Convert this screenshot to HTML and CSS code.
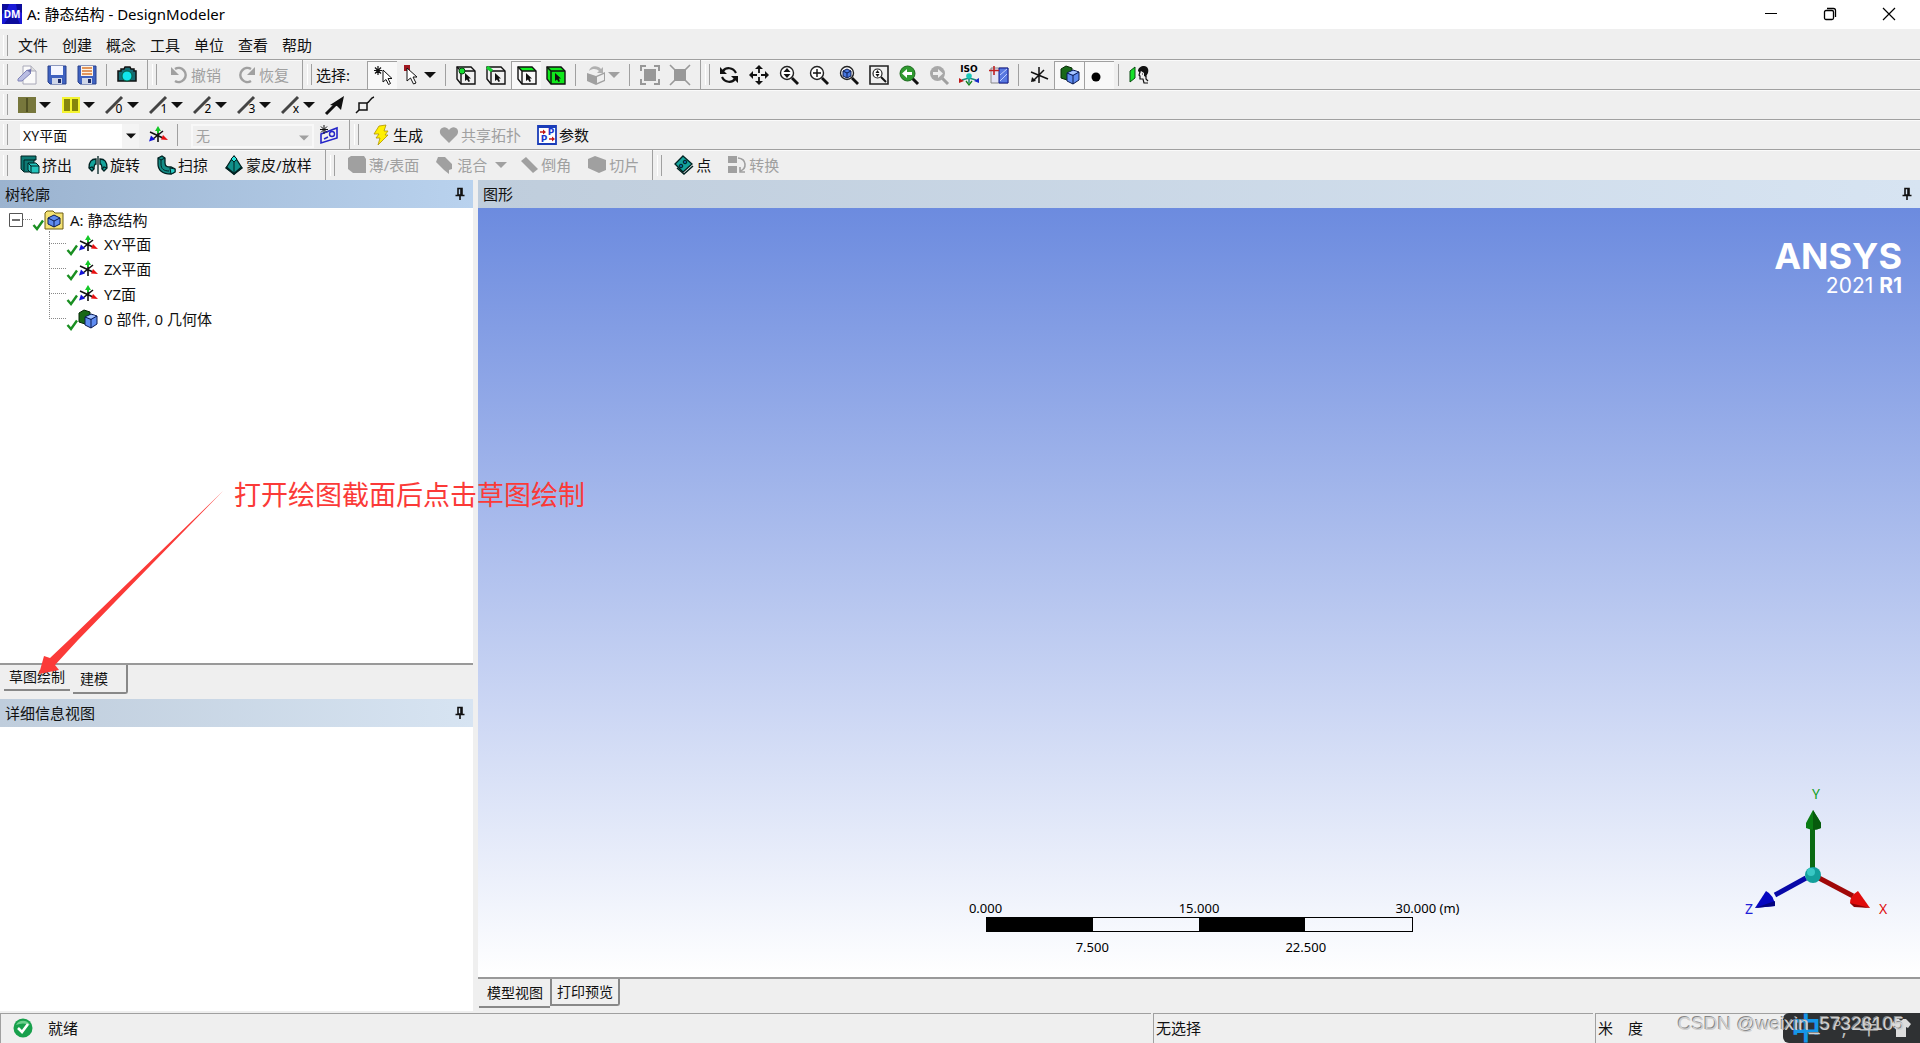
FILE: index.html
```html
<!DOCTYPE html>
<html lang="zh-CN">
<head>
<meta charset="utf-8">
<title>A: 静态结构 - DesignModeler</title>
<link rel="stylesheet" href="styles.css">
</head>
<body>
<svg class="defs" aria-hidden="true">
  <symbol id="caret" viewBox="0 0 12 8"><path d="M0 1h12L6 7z" fill="currentColor"/></symbol>
  <symbol id="pin" viewBox="0 0 12 14"><path d="M4 1.500h4V8H4zM7 2v6M1.500 8.500h9M6 9v4" fill="none" stroke="#111" stroke-width="1.600"/></symbol>
  <symbol id="check" viewBox="0 0 12 12"><path d="M1.500 6l3.500 4 6-8.500" fill="none" stroke="#1a8f22" stroke-width="2.400"/></symbol>
  <symbol id="axes" viewBox="0 0 20 20"><path d="M2 7l13 6M15 6L5 14M10 6v11" stroke="#111" stroke-width="1.600"/><path d="M7 6l3-5 3 5z" fill="#14c828"/><path d="M10 3v5" stroke="#14c828" stroke-width="2"/><path d="M20 15l-7-.5 2-4.500z" fill="#e81010"/><path d="M1 16.500l2-6 4 4z" fill="#1010d8"/></symbol>
  <symbol id="bodies" viewBox="0 0 20 20"><path d="M1 4l5-3 6 2v10l-5 2-6-2z" fill="#186818" stroke="#052805"/><path d="M7 8l6-3 6 2v8l-6 4-6-3z" fill="#5f8cf0" stroke="#0a1a50"/><path d="M8 8l5-2 5 1-5 2.500z" fill="#a8c6ff"/><path d="M7 8l6 2.500L19 7M13 10.500V19" fill="none" stroke="#0a1a50"/></symbol>
  <symbol id="cube" viewBox="0 0 20 20"><path d="M1 2h14l4 4v13H5L1 14z" fill="none" stroke="#111" stroke-width="1.400"/><path d="M1 2l4 4h14M5 6v13" fill="none" stroke="#111" stroke-width="1.400"/><path d="M9 8v8l2-1.500L12.500 17l1.500-.8-1.300-2.700H15z" fill="#111"/></symbol>
  <symbol id="lens" viewBox="0 0 20 20"><circle cx="8" cy="8" r="6.500" fill="#fff" stroke="#222" stroke-width="1.400"/><path d="M13 13l6 6" stroke="#111" stroke-width="2.800"/></symbol>
  <symbol id="edge" viewBox="0 0 20 20"><path d="M1 18L17 2" stroke="#444" stroke-width="3"/></symbol>
</svg>

<div class="window">
  <header class="titlebar">
    <svg class="app-icon" viewBox="0 0 20 20"><path d="M0 0h20v20H0z" fill="#1a1ad8"/><path d="M0 0h7l-3 8-4 2zM14 0h6v9l-5-3zM2 20l5-7h8l3 7z" fill="#0c0c9c"/><text x="10" y="14" text-anchor="middle" class="app-mark">DM</text></svg>
    <h1>A: 静态结构 - DesignModeler</h1>
    <div class="caption">
      <button type="button" aria-label="最小化"><svg viewBox="0 0 14 14"><path d="M1 6.500h12" stroke="#000"/></svg></button>
      <button type="button" aria-label="还原"><svg viewBox="0 0 14 14"><path d="M4 1.500h6.500a2 2 0 0 1 2 2V10" fill="none" stroke="#000" stroke-width="1.300"/><rect x="1.500" y="3.500" width="9" height="9" rx="1.500" fill="none" stroke="#000" stroke-width="1.300"/></svg></button>
      <button type="button" aria-label="关闭"><svg viewBox="0 0 14 14"><path d="M1 1l12 12M13 1L1 13" stroke="#000" stroke-width="1.200"/></svg></button>
    </div>
  </header>

  <nav class="bar menu" aria-label="主菜单">
    <button type="button">文件</button><button type="button">创建</button><button type="button">概念</button><button type="button">工具</button><button type="button">单位</button><button type="button">查看</button><button type="button">帮助</button>
  </nav>

  <div class="bar">
    <div class="group">
      <button class="tool" type="button" aria-label="新建"><svg viewBox="0 0 20 20"><path d="M6 1h8l5 5v13H6z" fill="#fafafa" stroke="#a8a8b8"/><path d="M14 1v5h5" fill="#ddd" stroke="#a8a8b8"/><path d="M1 14l9-9 4 3-9 8H1z" fill="#b9bde2" stroke="#8084b8"/><path d="M10 5l4-1v4" fill="#7075b0"/></svg></button>
      <button class="tool" type="button" aria-label="保存"><svg viewBox="0 0 20 20"><path d="M1 1h18v18H3l-2-2z" fill="#3f62c0" stroke="#28408c"/><path d="M4 1h12v9H4z" fill="#f4f6ff"/><path d="M5 13h10v6H5z" fill="#cfd6e8"/><path d="M11 14h3v4h-3z" fill="#1c2c68"/></svg></button>
      <button class="tool" type="button" aria-label="另存为"><svg viewBox="0 0 20 20"><path d="M1 1h18v18H3l-2-2z" fill="#3f62c0" stroke="#28408c"/><path d="M4 1h12v10H4z" fill="#fff3e4"/><path d="M5 3h10M5 6h10M5 9h10" stroke="#d87830" stroke-width="1.400"/><path d="M5 13h10v6H5z" fill="#cfd6e8"/><path d="M11 14h3v4h-3z" fill="#1c2c68"/></svg></button>
      <span class="sep"></span>
      <button class="tool" type="button" aria-label="截图"><svg viewBox="0 0 20 20"><path d="M1 6h3V4h3l1-2h5l1 2h3v2h2v10H1z" fill="#176c74" stroke="#111" stroke-width="1.500"/><circle cx="10" cy="11" r="5" fill="#12e4ec" stroke="#064"/></svg></button>
    </div>
    <div class="group">
      <button class="labelled" type="button" disabled><svg viewBox="0 0 20 20"><path d="M6 4a7 7 0 1 1 0 12" fill="none" stroke="#a0a0a0" stroke-width="2.600"/><path d="M2 2v8h8z" fill="#a0a0a0"/></svg>撤销</button>
      <button class="labelled" type="button" disabled><svg viewBox="0 0 20 20"><path d="M14 4a7 7 0 1 0 0 12" fill="none" stroke="#a0a0a0" stroke-width="2.600"/><path d="M18 2v8h-8z" fill="#a0a0a0"/></svg>恢复</button>
    </div>
    <div class="group">
      <span class="caption-text">选择:</span>
      <button class="tool pressed" type="button" aria-label="新选择"><svg viewBox="0 0 20 20"><path d="M5 1v9M1 5.500h8M2 2.500l6 6M8 2.500l-6 6" stroke="#111" stroke-width="1.200"/><path d="M10 5v12l3-2.500 2.500 5 2-1-2.500-5h4z" fill="#fff" stroke="#111"/></svg></button>
      <button class="drop" type="button" aria-label="选择模式"><svg viewBox="0 0 20 20"><path d="M2 0h6v6H2z" fill="#a01820"/><path d="M5 3v13l3.500-3 3 6 2.500-1-3-6h4z" fill="#fff" stroke="#111"/></svg><svg class="caret"><use href="#caret"/></svg></button>
      <span class="sep"></span>
      <button class="tool" type="button" aria-label="点"><svg viewBox="0 0 20 20"><use href="#cube"/><circle cx="6" cy="6" r="3" fill="#16e030" stroke="#064a10"/></svg></button>
      <button class="tool" type="button" aria-label="边"><svg viewBox="0 0 20 20"><use href="#cube"/><path d="M1 2l5 4" stroke="#16d030" stroke-width="3.500"/></svg></button>
      <button class="tool pressed" type="button" aria-label="面"><svg viewBox="0 0 20 20"><path d="M1 2h14l4 4H5z" fill="#10f020"/><use href="#cube"/></svg></button>
      <button class="tool" type="button" aria-label="体"><svg viewBox="0 0 20 20"><path d="M1 2h14l4 4v13H5L1 14z" fill="#10e81c"/><use href="#cube"/></svg></button>
      <span class="sep"></span>
      <button class="drop" type="button" aria-label="扩展选择" disabled><svg viewBox="0 0 20 20"><path d="M1 8l9 3 9-4v9l-9 4-9-4z" fill="#a0a0a0"/><path d="M11 12l7-3v6l-7 3z" fill="#eee"/><path d="M3 6c1-6 9-6 12-2l2-2v6h-6l2-2C11 4 7 3 3 6z" fill="#b0b0b0"/></svg><svg class="caret"><use href="#caret"/></svg></button>
      <span class="sep"></span>
      <button class="tool" type="button" aria-label="全部显示" disabled><svg viewBox="0 0 20 20"><path d="M4 4h12v12H4z" fill="#989898"/><path d="M1 6V1h5M14 1h5v5M19 14v5h-5M6 19H1v-5" fill="none" stroke="#989898" stroke-width="2"/></svg></button>
      <button class="tool" type="button" aria-label="隐藏" disabled><svg viewBox="0 0 20 20"><path d="M4 4h12v12H4z" fill="#989898"/><path d="M0 0l5 5M20 0l-5 5M0 20l5-5M20 20l-5-5" stroke="#989898" stroke-width="1.600"/></svg></button>
    </div>
    <div class="group open">
      <button class="tool" type="button" aria-label="旋转视图"><svg viewBox="0 0 20 20"><path d="M4 6c3-4 10-4 13 2M16 14c-3 4-10 4-13-2" fill="none" stroke="#111" stroke-width="2.200"/><path d="M1 2v7h7zM19 18v-7h-7z" fill="#111"/></svg></button>
      <button class="tool" type="button" aria-label="平移"><svg viewBox="0 0 20 20"><path d="M10 3v5M10 12v5M3 10h5M12 10h5" stroke="#111" stroke-width="1.800"/><path d="M10 0l4 4H6zM10 20l4-4H6zM0 10l4-4v8zM20 10l-4-4v8z" fill="#111"/></svg></button>
      <button class="tool" type="button" aria-label="缩放"><svg viewBox="0 0 20 20"><use href="#lens"/><path d="M8 3l3.500 4h-7zM8 13l3.500-4h-7z" fill="#111"/></svg></button>
      <button class="tool" type="button" aria-label="放大"><svg viewBox="0 0 20 20"><use href="#lens"/><path d="M8 4v8M4 8h8" stroke="#111" stroke-width="1.400"/></svg></button>
      <button class="tool" type="button" aria-label="缩放至合适"><svg viewBox="0 0 20 20"><use href="#lens"/><path d="M4 6l4-2 4 2v5l-4 2-4-2z" fill="#4878e0" stroke="#0a1a50"/><path d="M4 6l4 2 4-2M8 8v5" fill="none" stroke="#0a1a50"/></svg></button>
      <button class="tool" type="button" aria-label="放大镜窗口"><svg viewBox="0 0 20 20"><path d="M1 1h18v18H1z" fill="none" stroke="#222" stroke-width="1.600"/><circle cx="8.500" cy="8.500" r="4.500" fill="#fff" stroke="#222" stroke-width="1.200"/><path d="M8.500 5l2 3h-4zM8.500 12l2-3h-4z" fill="#111"/><path d="M12 12l5 5" stroke="#111" stroke-width="2"/></svg></button>
      <button class="tool" type="button" aria-label="上一视图"><svg viewBox="0 0 20 20"><path d="M13 13l6 6" stroke="#111" stroke-width="3"/><circle cx="8.500" cy="8.500" r="7.500" fill="#2f9a30" stroke="#1d6a1e"/><path d="M3 8.500l5-4.500v3h5v3H8v3z" fill="#fff"/></svg></button>
      <button class="tool" type="button" aria-label="下一视图" disabled><svg viewBox="0 0 20 20"><path d="M13 13l6 6" stroke="#a0a0a0" stroke-width="3"/><circle cx="8.500" cy="8.500" r="7.500" fill="#a8a8a8"/><path d="M14 8.500L9 4v3H4v3h5v3z" fill="#eee"/></svg></button>
      <button class="tool" type="button" aria-label="等轴测视图"><svg viewBox="0 0 20 20"><text x="10" y="7" text-anchor="middle" class="iso">ISO</text><path d="M10 11v7M3 15l7-2 7 2" stroke="#178a7a" stroke-width="1.500" fill="none"/><circle cx="10" cy="11" r="2.800" fill="#18c8b8"/><path d="M0 18v-5l5 3z" fill="#c01818"/><path d="M20 18v-5l-5 3z" fill="#1828c8"/><path d="M7 16l3 4 3-4" fill="none" stroke="#108018" stroke-width="1.300"/></svg></button>
      <button class="tool" type="button" aria-label="面查看"><svg viewBox="0 0 20 20"><path d="M2 3h17v15H2z" fill="#e4e4f4" stroke="#888"/><path d="M10 3h9v15h-9z" fill="#5878e0" stroke="#10188c"/><path d="M11 10l7-6M11 16l7-7" stroke="#c0d0ff"/><path d="M5 1v9M0 5.500h10" stroke="#c02020" stroke-width="1.600"/></svg></button>
      <span class="sep"></span>
      <button class="tool" type="button" aria-label="显示平面"><svg viewBox="0 0 20 20"><path d="M2 7l17 7M15 5L4 16M10 2v16" stroke="#111" stroke-width="1.500"/><path d="M2 17l1-5 4 4z" fill="#111"/></svg></button>
      <button class="tool pressed" type="button" aria-label="显示模型"><svg viewBox="0 0 20 20"><use href="#bodies"/></svg></button>
      <button class="tool pressed" type="button" aria-label="显示点"><svg viewBox="0 0 20 20"><circle cx="6" cy="12" r="4.500" fill="#000"/></svg></button>
      <span class="sep"></span>
      <button class="tool" type="button" aria-label="查看方向"><svg viewBox="0 0 20 20"><path d="M1 6l5-4v11l-5 4z" fill="#16e028" stroke="#084a10"/><path d="M9 6c0-3 3-5 6-5 4 0 5 4 4 7-1 2-2 3-2 4l-2-1V8l-3-2-1 2z" fill="#111"/><path d="M11 7l-1 3 1 1v3h3l1 4h4M13 9h1M17 11v3l2 2" fill="none" stroke="#111" stroke-width="1.200"/></svg></button>
    </div>
  </div>

  <div class="bar">
    <div class="group open">
      <button class="drop" type="button" aria-label="面颜色"><svg viewBox="0 0 20 20"><path d="M1 2h18v16H1z" fill="#77773c"/><path d="M10 3v14" stroke="#45451c" stroke-width="1.500"/></svg><svg class="caret"><use href="#caret"/></svg></button>
      <button class="drop" type="button" aria-label="边颜色"><svg viewBox="0 0 20 20"><path d="M1 2h18v16H1z" fill="#f4f430"/><path d="M3 4h6v12H3zM11 4h6v12h-6z" fill="#85850c"/></svg><svg class="caret"><use href="#caret"/></svg></button>
      <button class="drop" type="button" aria-label="边连接 0"><svg viewBox="0 0 20 20"><use href="#edge"/><text x="14" y="18" text-anchor="middle" class="digit">0</text></svg><svg class="caret"><use href="#caret"/></svg></button>
      <button class="drop" type="button" aria-label="边连接 1"><svg viewBox="0 0 20 20"><use href="#edge"/><text x="15" y="18" text-anchor="middle" class="digit">1</text></svg><svg class="caret"><use href="#caret"/></svg></button>
      <button class="drop" type="button" aria-label="边连接 2"><svg viewBox="0 0 20 20"><use href="#edge"/><text x="15" y="18" text-anchor="middle" class="digit">2</text></svg><svg class="caret"><use href="#caret"/></svg></button>
      <button class="drop" type="button" aria-label="边连接 3"><svg viewBox="0 0 20 20"><use href="#edge"/><text x="15" y="18" text-anchor="middle" class="digit">3</text></svg><svg class="caret"><use href="#caret"/></svg></button>
      <button class="drop" type="button" aria-label="边连接 X"><svg viewBox="0 0 20 20"><use href="#edge"/><text x="15" y="18" text-anchor="middle" class="digit">x</text></svg><svg class="caret"><use href="#caret"/></svg></button>
      <button class="tool" type="button" aria-label="边方向"><svg viewBox="0 0 20 20"><path d="M1 19L13 7" stroke="#111" stroke-width="3"/><path d="M19 1l-3 14-4-4-7-1z" fill="#111"/></svg></button>
      <button class="tool" type="button" aria-label="显示顶点"><svg viewBox="0 0 20 20"><path d="M4 8h8v7H4zM12 8c3-1 3-5 7-6M4 15l-3 3" fill="none" stroke="#111" stroke-width="1.500"/></svg></button>
    </div>
  </div>

  <div class="bar">
    <div class="group">
      <label class="picker plane"><select aria-label="平面"><option>XY平面</option><option>ZX平面</option><option>YZ面</option></select><svg class="caret"><use href="#caret"/></svg></label>
      <button class="tool" type="button" aria-label="新平面"><svg viewBox="0 0 20 20"><use href="#axes"/></svg></button>
      <span class="sep"></span>
      <label class="picker sketch"><select aria-label="草图" disabled><option>无</option></select><svg class="caret"><use href="#caret"/></svg></label>
      <button class="tool" type="button" aria-label="新草图"><svg viewBox="0 0 20 20"><path d="M2 9l16-6v10L2 18z" fill="none" stroke="#2424c8" stroke-width="1.600"/><circle cx="13" cy="9" r="2.500" fill="none" stroke="#2424c8" stroke-width="1.400"/><path d="M5 14l4-2" stroke="#2424c8" stroke-width="1.400"/><path d="M5 0v9M1 4.500h8M2 1.500l6 6M8 1.500l-6 6" stroke="#111"/></svg></button>
    </div>
    <div class="group open">
      <button class="labelled" type="button"><svg viewBox="0 0 20 20"><path d="M8 1l7-1-2 6h4l-3 4h3L7 20l2-7H5l3-4H3z" fill="#fff000" stroke="#b09400" stroke-width=".8"/></svg>生成</button>
      <button class="labelled" type="button" disabled><svg viewBox="0 0 20 20"><path d="M10 18L2 10C-2 4 6-1 10 5c4-6 12-1 8 5z" fill="#a0a0a0"/></svg>共享拓扑</button>
      <button class="labelled" type="button"><svg viewBox="0 0 20 20"><path d="M1 1h18v18H1z" fill="#fff" stroke="#1a3cb8" stroke-width="1.800"/><path d="M1 2h18" stroke="#1a3cb8" stroke-width="2"/><path d="M3 7h4M12 14h4" stroke="#c01818" stroke-width="1.400"/><path d="M6 4.500L9 7 6 9.500zM15 11.500l3 2.500-3 2.500z" fill="#c01818"/><text x="14" y="10" text-anchor="middle" class="param">P</text><text x="7" y="17" text-anchor="middle" class="param">P</text></svg>参数</button>
    </div>
  </div>

  <div class="bar last">
    <div class="group">
      <button class="labelled" type="button"><svg viewBox="0 0 20 20"><path d="M1 1h15v4h-2v12H4l-3-3z" fill="#0d7a74" stroke="#022"/><path d="M4 5h11M4 5v11" stroke="#022" fill="none"/><path d="M8 8h8l3 3v7h-8l-3-3z" fill="#24c4bc" stroke="#022"/><path d="M8 8l3 3h8M11 11v7" fill="none" stroke="#022"/></svg>挤出</button>
      <button class="labelled" type="button"><svg viewBox="0 0 20 20"><path d="M1 13C1 6 4 4 8 4v5c-2 0-2 2-2 5l-2 2zM19 13c0-7-3-9-7-9v5c2 0 2 2 2 5l2 2z" fill="#14a49c" stroke="#022" stroke-width="1.300"/><path d="M10 1v18M1 13l3-1 2 2M19 13l-3-1-2 2" fill="none" stroke="#022" stroke-width="1.300"/></svg>旋转</button>
      <button class="labelled" type="button"><svg viewBox="0 0 20 20"><path d="M2 3l4-2 3 2v5c0 4 3 4 6 4l4 2v3l-4 2C6 19 2 15 2 9z" fill="#128c86" stroke="#022" stroke-width="1.300"/><path d="M2 3l3 2 4-2M5 5v4c0 5 3 7 8 7" fill="none" stroke="#022"/><path d="M14 13l5 1v3l-4 2z" fill="#28ccc4" stroke="#022"/></svg>扫掠</button>
      <button class="labelled" type="button"><svg viewBox="0 0 20 20"><path d="M10 1l3 4 5 8-8 6-8-6 5-8z" fill="#11908a" stroke="#022" stroke-width="1.300"/><path d="M10 1l3 3-3 3-3-3z" fill="#28e0d8" stroke="#022"/><path d="M10 7v12" stroke="#022"/><path d="M2 12l8 7 8-7" fill="none" stroke="#022" stroke-width="2"/></svg>蒙皮/放样</button>
    </div>
    <div class="group">
      <button class="labelled" type="button" disabled><svg viewBox="0 0 20 20"><path d="M1 3l3-2h13l2 3v14H6l-5-4z" fill="#a0a0a0"/></svg>薄/表面</button>
      <button class="labelled" type="button" disabled><svg viewBox="0 0 20 20"><path d="M3 2h7l7 7v5l-3 1v4l-5-4-8-8z" fill="#a0a0a0"/></svg>混合<svg class="caret"><use href="#caret"/></svg></button>
      <button class="labelled" type="button" disabled><svg viewBox="0 0 20 20"><path d="M2 6l5-4 12 12-5 4z" fill="#a0a0a0"/></svg>倒角</button>
      <button class="labelled" type="button" disabled><svg viewBox="0 0 20 20"><path d="M1 4l7-3 11 4v10l-7 3L1 13z" fill="#a0a0a0"/></svg>切片</button>
    </div>
    <div class="group open">
      <button class="labelled" type="button"><svg viewBox="0 0 20 20"><path d="M9 1l9 8-9 8-8-8z" fill="#14a49c" stroke="#022" stroke-width="1.300"/><path d="M3 13l7 6 9-8" fill="none" stroke="#022" stroke-width="1.500"/><circle cx="11" cy="7" r="1.800" fill="#0868a0" stroke="#022"/><circle cx="7" cy="11" r="1.800" fill="#0868a0" stroke="#022"/></svg>点</button>
      <button class="labelled" type="button" disabled><svg viewBox="0 0 20 20"><path d="M1 1h9v7H1zM1 11h9v7H1z" fill="#a0a0a0"/><path d="M11 3c9 1 9 11 2 13M13 12v5h5" fill="none" stroke="#a0a0a0" stroke-width="1.600"/></svg>转换</button>
    </div>
  </div>

  <main class="workspace">
    <section class="side">
      <div class="panel-head active"><h2>树轮廓</h2><svg class="pin"><use href="#pin"/></svg></div>
      <div class="tree">
        <div class="node root"><svg class="expander" viewBox="0 0 14 14"><path d="M.5.5h13v13H.5z" fill="#fff" stroke="#555"/><path d="M3 7h8" stroke="#222" stroke-width="1.300"/></svg><span class="lead"></span><svg class="check"><use href="#check"/></svg><svg class="node-icon" viewBox="0 0 20 20"><path d="M1 3l2-2h6l2 2h8v16H1z" fill="#f4e274" stroke="#6c5c10"/><path d="M4 8l6-3 6 3v6l-6 3-6-3z" fill="#5f8cf0" stroke="#0a1a50"/><path d="M4 8l6 3 6-3M10 11v6" fill="none" stroke="#0a1a50"/></svg>A: 静态结构</div>
        <ul>
          <li class="node"><span class="lead"></span><svg class="check"><use href="#check"/></svg><svg class="node-icon"><use href="#axes"/></svg>XY平面</li>
          <li class="node"><span class="lead"></span><svg class="check"><use href="#check"/></svg><svg class="node-icon"><use href="#axes"/></svg>ZX平面</li>
          <li class="node"><span class="lead"></span><svg class="check"><use href="#check"/></svg><svg class="node-icon"><use href="#axes"/></svg>YZ面</li>
          <li class="node"><span class="lead"></span><svg class="check"><use href="#check"/></svg><svg class="node-icon"><use href="#bodies"/></svg>0 部件, 0 几何体</li>
        </ul>
      </div>
      <div class="tabs"><button type="button">草图绘制</button><button class="current" type="button">建模</button></div>
      <div class="panel-head"><h2>详细信息视图</h2><svg class="pin"><use href="#pin"/></svg></div>
      <div class="details"></div>
    </section>

    <section class="graphics">
      <div class="panel-head"><h2>图形</h2><svg class="pin"><use href="#pin"/></svg></div>
      <div class="viewport">
        <div class="brand"><strong>ANSYS</strong><span>2021 <b>R1</b></span></div>
        <div class="scale">
          <div class="scale-row ends"><span>0.000</span><span>15.000</span><span>30.000 <i>(m)</i></span></div>
          <div class="scale-bar"><span></span><span></span><span></span><span></span></div>
          <div class="scale-row halves"><span>7.500</span><span>22.500</span></div>
        </div>
        <svg class="triad" viewBox="0 0 150 140">
          <path d="M71 42h5v44h-5z" fill="#0a6a12"/><path d="M74 26l8 13v5q-8 3-15 0v-5z" fill="#0a7c14"/><path d="M74 26l8 13v5q-4 2-8 2z" fill="#065a0c"/>
          <path d="M67 94L36 111" stroke="#0808a8" stroke-width="5"/><path d="M16 124l11-17q8 4 9 15z" fill="#0606c0"/><path d="M16 124l20-7v5z" fill="#040480"/>
          <path d="M80 94l34 18" stroke="#a00808" stroke-width="5"/><path d="M131 124l-12-17q-8 5-8 12l4 3z" fill="#e00c0c"/><path d="M131 124l-20-5 4 4z" fill="#8c0404"/>
          <circle cx="74" cy="91" r="8" fill="#14a09c"/><circle cx="72" cy="88" r="4" fill="#38c8c4"/>
          <text x="77" y="15" text-anchor="middle" fill="#12a022">Y</text><text x="10" y="130" text-anchor="middle" fill="#2020d8">Z</text><text x="144" y="130" text-anchor="middle" fill="#e01010">X</text>
        </svg>
      </div>
      <div class="tabs"><button class="current" type="button">模型视图</button><button class="raised" type="button">打印预览</button></div>
    </section>
  </main>

  <footer class="status">
    <div class="cell ready"><svg viewBox="0 0 20 20"><circle cx="10" cy="10" r="9.500" fill="#18a04c"/><path d="M3 7a8 8 0 0 1 14 0q-7-3-14 0z" fill="#6cd08c"/><path d="M5 10l4 4 6-8" fill="none" stroke="#fff" stroke-width="2.600"/></svg>就绪</div>
    <div class="cell">无选择</div>
    <div class="cell units"><span>米</span><span>度</span></div>
  </footer>

  <div class="ime"><span class="lang">中</span><span>°,</span><span>半</span><svg viewBox="0 0 20 20"><path d="M5 1h3q2 3 4 0h3l5 5-3 4-2-1v10H5V9L3 10 0 6z" fill="#ddd"/></svg></div>
  <div class="watermark">CSDN @weixin_57326105</div>
  <svg class="callout-arrow" viewBox="0 0 190 190"><path d="M185 3L31 152 12 170l-6-2L1 186l20-4-4-5 23-25z" fill="#fb3a38"/></svg>
  <p class="callout">打开绘图截面后点击草图绘制</p>
</div>
</body>
</html>
```
FILE: styles.css
```css
* { box-sizing: border-box; }

body {
  margin: 0;
  color: #111;
  background: #efefef;
  font: 15px/20px "Noto Sans", "Noto Sans CJK SC", sans-serif;
}

h1, h2, p, ul { margin: 0; padding: 0; font-size: inherit; font-weight: 400; }
li { list-style: none; }

button, select {
  padding: 0;
  border: 0;
  border-radius: 0;
  color: inherit;
  background: none;
  font: inherit;
}

button { display: flex; align-items: center; justify-content: center; flex: none; white-space: nowrap; }
button:disabled, select:disabled { color: #a0a0a0; opacity: 1; }
svg { flex: none; width: 20px; height: 20px; overflow: visible; }

.defs { position: absolute; width: 0; height: 0; overflow: hidden; }

.window {
  position: relative;
  display: flex;
  flex-direction: column;
  min-height: 100vh;
  overflow: hidden;
}

/* Title bar */
.titlebar {
  display: flex;
  align-items: center;
  gap: 5px;
  height: 29px;
  padding: 0 2px 2px;
  color: #000;
  background: #fff;
}
.app-mark { fill: #fff; font: bold 10px "Noto Sans", sans-serif; }
.caption { display: flex; margin-left: auto; }
.caption button { width: 59px; height: 27px; }
.caption svg { width: 14px; height: 14px; }

/* Toolbars */
.bar {
  display: flex;
  gap: 1px;
  height: 30px;
  border-bottom: 1px solid #a0a0a0;
  box-shadow: inset 0 1px #fafafa;
}
.bar.last { border-bottom: 0; }
.group, .menu {
  display: flex;
  align-items: center;
}
.group { padding-right: 5px; border-right: 1px solid #a0a0a0; }
.group.open { border-right: 0; }
.group::before, .menu::before {
  content: "";
  flex: none;
  width: 3px;
  height: 21px;
  margin: 0 4px 0 3px;
  border-right: 1px solid #a0a0a0;
  border-left: 1px solid #fff;
}
.menu { gap: 14px; height: 31px; padding-top: 2px; box-shadow: none; }
.menu::before { margin-right: -4px; }

.tool { width: 30px; height: 28px; }
.drop { gap: 2px; width: 44px; height: 28px; }
.labelled { gap: 2px; height: 28px; padding: 0 8px; }
.caret { width: 12px; height: 8px; }
.labelled .caret { margin: 0 -4px 0 6px; }
.pressed {
  border-top: 1px solid #a0a0a0;
  border-left: 1px solid #a0a0a0;
  background: #f8f8f8;
}
.sep { flex: none; width: 10px; height: 22px; background: linear-gradient(#a0a0a0, #a0a0a0) 4px 0 / 1px 100% no-repeat; }
.caption-text { width: 51px; }

.iso { font: bold 9px "DejaVu Sans", sans-serif; }
.digit { font: 12px "Noto Sans", sans-serif; }
.param { fill: #1838d0; font: bold 9px "DejaVu Sans", sans-serif; }

.picker { position: relative; display: flex; height: 24px; margin: 3px 0 0 8px; font-size: 14px; }
.picker select { width: 100%; padding-left: 3px; appearance: none; }
.picker .caret { position: absolute; top: 8px; right: 3px; width: 10px; pointer-events: none; }
.plane { width: 119px; margin-right: 4px; background: linear-gradient(90deg, #fff 102px, #f4f4f4 102px); }
.sketch { width: 123px; color: #a0a0a0; border: 2px solid #f8f8f8; }

/* Main area */
.workspace { display: flex; flex: 1; gap: 5px; margin-bottom: 2px; }
.side { display: flex; flex-direction: column; width: 473px; background: #fff; }
.graphics { display: flex; flex: 1; flex-direction: column; }

.panel-head {
  display: flex;
  align-items: center;
  justify-content: space-between;
  height: 28px;
  padding: 0 7px 0 5px;
  background: linear-gradient(90deg, #bfcddc, #d7e4f2);
}
.panel-head.active { background: linear-gradient(90deg, #9bb3cf, #b9d2ee); }
.pin { width: 12px; height: 14px; }

.tree { flex: 456; }
.node { display: flex; align-items: center; height: 25px; }
.node .lead { width: 17px; border-top: 1px dotted #888; }
.check { align-self: flex-end; width: 12px; height: 12px; }
.node-icon { margin-right: 6px; }
.root { height: 23px; padding-left: 9px; }
.root .expander { width: 14px; height: 14px; }
.root .lead { width: 9px; }
.tree ul { position: relative; margin-left: 49px; }
.tree ul::before { content: ""; position: absolute; top: 0; bottom: 12px; border-left: 1px dotted #888; }

.tabs { display: flex; align-items: flex-start; background: #efefef; border-top: 2px solid #999; font-size: 14px; }
.tabs button { height: 26px; padding: 0 5px; border-bottom: 2px solid #888; }
.tabs .current { height: 29px; }
.side .tabs { height: 36px; padding-left: 4px; gap: 3px; }
.side .tabs .current { padding: 1px 18px 0 7px; border-right: 2px solid #888; border-radius: 0 0 3px 0; }
.details { flex: 284; background: #fff; }

.graphics .tabs { height: 34px; padding-left: 1px; }
.graphics .tabs .current { padding: 1px 7px 0 8px; }
.graphics .tabs .raised { height: 27px; border-left: 2px solid #888; border-right: 2px solid #888; border-radius: 0 0 3px 0; }

/* Viewport */
.viewport {
  display: grid;
  flex: 1;
  grid-template-columns: 1fr 427px 1fr;
  grid-template-rows: auto 1fr;
  background: linear-gradient(#6c8bdf, #fff);
}
.brand {
  grid-column: 3;
  justify-self: end;
  display: flex;
  flex-direction: column;
  align-items: flex-end;
  margin: 30px 18px 0 0;
  color: #fff;
  font-family: Inter, sans-serif;
}
.brand strong { font-size: 36px; line-height: 36px; }
.brand span { font-size: 21px; line-height: 24px; }

.scale { grid-column: 2; grid-row: 2; align-self: end; padding-bottom: 21px; color: #000; font-size: 13px; line-height: 18px; }
.scale-row { display: grid; text-align: center; }
.scale-row span { white-space: nowrap; }
.scale-row i { font-style: normal; }
.ends { grid-template-columns: 34px 1fr 34px; margin: 0 -17px; }
.halves { grid-template-columns: 1fr 1fr; padding-top: 6px; }
.scale-bar { display: grid; grid-template-columns: repeat(4, 1fr); height: 15px; border: 1px solid #000; }
.scale-bar span:nth-child(odd) { background: #000; }

.triad { grid-column: 3; grid-row: 2; align-self: end; justify-self: end; width: 150px; height: 140px; margin: 0 31px 53px 0; font-size: 14px; }

/* Status bar */
.status { display: grid; grid-template-columns: 1151fr 440fr 325fr; gap: 2px; height: 30px; }
.cell { display: flex; align-items: center; padding: 0 0 2px 2px; border-top: 1px solid #a0a0a0; border-left: 1px solid #a0a0a0; }
.ready { gap: 15px; padding-left: 12px; }
.units { gap: 15px; }

/* Input-method bar, watermark and callout lie over the window */
.ime {
  position: absolute;
  right: 0;
  bottom: 0;
  display: flex;
  align-items: center;
  gap: 12px;
  width: 137px;
  height: 30px;
  padding-left: 8px;
  color: #bbb;
  background: #2f3133;
  border-radius: 6px 0 0 6px;
  font-size: 20px;
}
.ime .lang { color: #1696e8; font-size: 30px; font-weight: 700; }
.watermark {
  position: absolute;
  right: 16px;
  bottom: 7px;
  color: #d0d0d0;
  font: 19px/24px "Liberation Sans", sans-serif;
  text-shadow: -1px -1px #888;
}
.callout-arrow { position: absolute; top: 488px; left: 38px; width: 190px; height: 190px; }
.callout { position: absolute; top: 477px; left: 234px; color: #fb3a38; font-size: 27px; line-height: 36px; white-space: nowrap; }
```
